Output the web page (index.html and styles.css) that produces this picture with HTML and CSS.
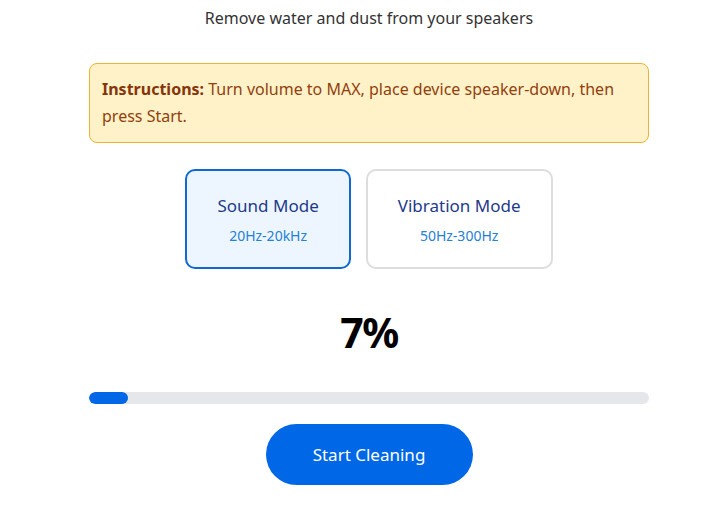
FILE: index.html
```html
<!DOCTYPE html>
<html lang="en">
<head>
    <meta charset="UTF-8">
    <meta name="viewport" content="width=device-width, initial-scale=1.0">
    <title>Speaker Cleaner</title>
    <link rel="stylesheet" href="styles.css">
</head>
<body>
    <main class="cleaner">
        <p class="subtitle">Remove water and dust from your speakers</p>

        <div class="instructions">
            <strong>Instructions:</strong> Turn volume to MAX, place device speaker-down, then press Start.
        </div>

        <div class="modes">
            <button class="mode-card active" data-mode="sound">
                <span class="mode-title">Sound Mode</span>
                <span class="mode-range">20Hz-20kHz</span>
            </button>
            <button class="mode-card" data-mode="vibration">
                <span class="mode-title">Vibration Mode</span>
                <span class="mode-range">50Hz-300Hz</span>
            </button>
        </div>

        <div class="percent" id="percent">7%</div>

        <div class="progress">
            <div class="progress-fill" id="progressFill" style="width: 7%"></div>
        </div>

        <div class="actions">
            <button class="btn-start" id="startBtn">Start Cleaning</button>
        </div>
    </main>
</body>
</html>
```

FILE: styles.css
```css
:root {
    --primary-color: #0068e6;
    --text-color: #333;
    --warn-bg: #fff2c8;
    --warn-border: #f0b232;
    --warn-text: #92400e;
    --track-color: #e5e7eb;
}

* {
    margin: 0;
    padding: 0;
    box-sizing: border-box;
    font-family: 'Noto Sans', 'Open Sans', sans-serif;
}

body {
    color: var(--text-color);
    background-color: #fff;
}

.cleaner {
    width: 560px;
    margin-left: 89px;
}

.subtitle {
    text-align: center;
    font-size: 16px;
    line-height: 22px;
    padding-top: 7px;
    color: #333;
}

.instructions {
    margin-top: 34px;
    background-color: var(--warn-bg);
    border: 1px solid var(--warn-border);
    border-radius: 8px;
    padding: 12px;
    color: var(--warn-text);
    font-size: 16px;
    line-height: 27px;
}

.instructions strong {
    font-weight: 700;
    color: #86340a;
}

.modes {
    display: flex;
    justify-content: center;
    gap: 15px;
    margin-top: 26px;
}

.mode-card {
    display: flex;
    flex-direction: column;
    align-items: center;
    justify-content: center;
    height: 100px;
    padding: 0 30px;
    background: #fff;
    border: 2px solid #ddd;
    border-radius: 10px;
    cursor: pointer;
}

.mode-card.active {
    background-color: #edf6ff;
    border-color: #1068d6;
}

.mode-title {
    font-size: 17px;
    color: #1e3a8a;
    line-height: 24px;
}

.mode-range {
    margin-top: 9px;
    font-size: 14px;
    color: #2680d4;
    line-height: 18px;
}

.percent {
    text-align: center;
    font-size: 41px;
    font-weight: 700;
    letter-spacing: -1.5px;
    color: #000;
    line-height: 56px;
    margin-top: 35px;
}

.progress {
    margin-top: 32px;
    height: 12px;
    border-radius: 6px;
    background-color: var(--track-color);
    overflow: hidden;
}

.progress-fill {
    height: 100%;
    border-radius: 6px;
    background-color: var(--primary-color);
}

.actions {
    display: flex;
    justify-content: center;
    margin-top: 20px;
}

.btn-start {
    width: 207px;
    height: 61px;
    border: none;
    border-radius: 31px;
    background-color: var(--primary-color);
    color: #fff;
    font-size: 17px;
    cursor: pointer;
}
```
